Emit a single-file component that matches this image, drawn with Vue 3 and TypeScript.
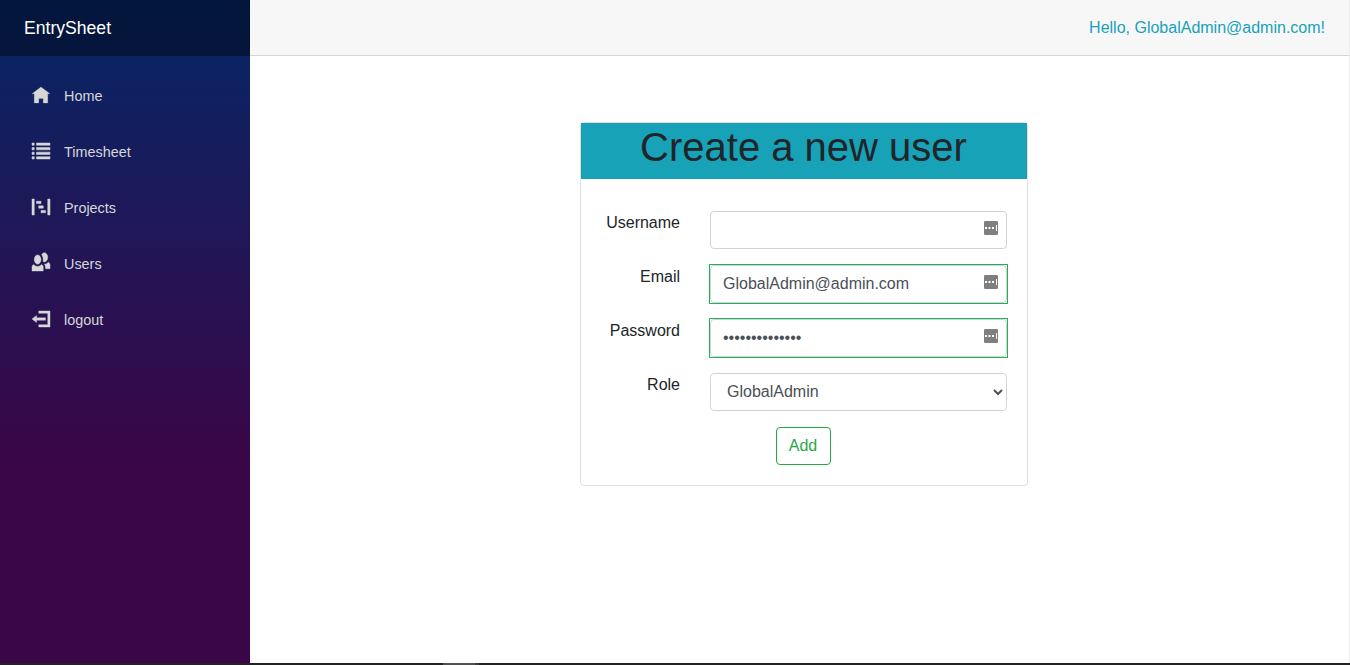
<script setup lang="ts">
import { ref } from 'vue'

interface NavItem {
  label: string
  path: string
  weight: number
}

const navItems: NavItem[] = [
  { label: 'Home', weight: 0.1, path: 'M4 0l-4 3h1v4h2v-2h2v2h2v-4.03l1 .03-4-3z' },
  {
    label: 'Timesheet',
    weight: 0.22,
    path: 'M0 0v1h1v-1h-1zm2 0v1h6v-1h-6zm-2 2v1h1v-1h-1zm2 0v1h6v-1h-6zm-2 2v1h1v-1h-1zm2 0v1h6v-1h-6zm-2 2v1h1v-1h-1zm2 0v1h6v-1h-6z',
  },
  {
    label: 'Projects',
    weight: 0.22,
    path: 'M0 0v7h1v-7h-1zm7 0v7h1v-7h-1zm-5 1v1h2v-1h-2zm1 2v1h2v-1h-2zm1 2v1h2v-1h-2z',
  },
  {
    label: 'Users',
    weight: 0.18,
    path: 'M5.5 -1c-.51 0-.95.35-1.22.88.45.54.72 1.28.72 2.13 0 .29-.03.55-.09.81.19.11.38.19.59.19.83 0 1.5-.9 1.5-2s-.67-2-1.5-2zm-3 1c-.83 0-1.5.9-1.5 2s.67 2 1.5 2 1.5-.9 1.5-2-.67-2-1.5-2zm4.75 3.16c-.43.51-1.02.82-1.69.84.27.38.44.84.44 1.34v.66h2v-1.66c0-.52-.31-.97-.75-1.19zm-6.5 1c-.44.22-.75.67-.75 1.19v1.66h5v-1.66c0-.52-.31-.97-.75-1.19-.45.53-1.06.84-1.75.84s-1.3-.32-1.75-.84z',
  },
  {
    label: 'logout',
    weight: 0.18,
    path: 'M3 0v1h4v5h-4v1h5v-7h-5zm-1 2l-2 1.5 2 1.5v-1h4v-1h-4v-1z',
  },
]

const fields = ref([
  { label: 'Username', type: 'text', value: '', valid: false },
  { label: 'Email', type: 'text', value: 'GlobalAdmin@admin.com', valid: true },
  { label: 'Password', type: 'password', value: '12345678901234', valid: true },
])
const role = ref('GlobalAdmin')
</script>

<template>
  <div class="screen">
    <div class="page">
      <aside class="sidebar">
        <div class="brand">EntrySheet</div>
        <nav class="nav">
          <a v-for="item in navItems" :key="item.label" class="nav-link">
            <svg class="nav-icon" viewBox="0 0 8 7" width="18" height="16" preserveAspectRatio="none">
              <path :d="item.path" :stroke-width="item.weight" />
            </svg>
            <span>{{ item.label }}</span>
          </a>
        </nav>
      </aside>
      <main class="main">
        <header class="top-row">
          <a class="greeting">Hello, GlobalAdmin@admin.com!</a>
        </header>
        <section class="content">
          <form class="card" @submit.prevent>
            <div class="card-header"><h1>Create a new user</h1></div>
            <div class="card-body">
              <div v-for="field in fields" :key="field.label" class="row">
                <label>{{ field.label }}</label>
                <div class="control" :class="{ valid: field.valid }">
                  <input v-model="field.value" :type="field.type" class="input" autocomplete="off" spellcheck="false" />
                  <svg class="key-icon" viewBox="0 0 14 14" width="14" height="14">
                    <rect width="14" height="14" rx="1.2" fill="#7f7f7f" />
                    <path d="M1 6h2v2h-2zM4.5 6h2v2h-2zM8 6h2v2h-2zM12 4h1v6h-1z" fill="#fff" />
                  </svg>
                </div>
              </div>
              <div class="row">
                <label>Role</label>
                <div class="control">
                  <select v-model="role" class="input select">
                    <option>GlobalAdmin</option>
                  </select>
                </div>
              </div>
              <div class="actions">
                <button type="submit" class="add">Add</button>
              </div>
            </div>
          </form>
        </section>
      </main>
      <div class="edge"></div>
    </div>
    <div class="dock"><span class="dock-active"></span><span class="dock-tail"></span></div>
  </div>
</template>

<style>
body {
  margin: 0;
  overflow: hidden;
}
</style>

<style scoped>
* {
  box-sizing: border-box;
}
.screen {
  display: flex;
  flex-direction: column;
  height: 665px;
  background: #fff;
  color: #212529;
  font: 16px/24px "Liberation Sans", Arial, sans-serif;
}
.page {
  display: flex;
  flex: 1;
  min-height: 0;
}
.sidebar {
  width: 250px;
  background: linear-gradient(180deg, rgb(5, 39, 103) 0%, #3a0647 70%);
}
.brand {
  height: 56px;
  padding-left: 24px;
  background: rgba(0, 0, 0, 0.4);
  color: #fff;
  font-size: 17.6px;
  line-height: 56px;
}
.nav {
  display: flex;
  flex-direction: column;
  gap: 16px;
  padding: 20px 12px;
}
.nav-link {
  display: flex;
  align-items: center;
  gap: 14px;
  height: 40px;
  padding-left: 20px;
  color: #d7d7d7;
  font-size: 14.4px;
}
.nav-icon {
  fill: #d7d7d7;
  stroke: #d7d7d7;
  overflow: visible;
  margin-top: -2px;
}
.main {
  flex: 1;
}
.top-row {
  display: flex;
  align-items: center;
  justify-content: flex-end;
  height: 56px;
  padding-right: 24px;
  border-bottom: 1px solid #d6d5d5;
  background: #f7f7f7;
}
.greeting {
  color: #17a2b8;
}
.content {
  display: flex;
  justify-content: center;
  padding: 66px 0 0 9px;
}
.card {
  width: 448px;
  height: 364px;
  border: 1px solid #dfdfdf;
  border-radius: 4px;
}
.card-header {
  height: 56px;
  padding-right: 1px;
  background: #17a2b8;
  text-align: center;
}
h1 {
  margin: 0;
  font-size: 40px;
  font-weight: 500;
  line-height: 48px;
}
.card-body {
  display: flex;
  flex-direction: column;
  gap: 16px;
  padding: 32px 20px 20px;
}
.row {
  display: grid;
  grid-template-columns: 79px 297px;
  column-gap: 30px;
  height: 38px;
}
label {
  text-align: right;
}
.control {
  position: relative;
}
.control.valid {
  outline: 1px solid #26b050;
}
.input {
  display: block;
  width: 100%;
  height: 38px;
  margin: 0;
  padding: 6px 12px;
  border: 1px solid #ced4da;
  border-radius: 4px;
  outline: none;
  background: #fff;
  color: #495057;
  font: inherit;
}
.select {
  padding: 5px 12px 7px;
}
.key-icon {
  position: absolute;
  top: 10px;
  right: 9px;
}
.actions {
  display: flex;
  justify-content: center;
  padding-right: 2px;
}
.add {
  width: 55px;
  height: 38px;
  padding: 0;
  border: 1px solid #28a745;
  border-radius: 4px;
  background: transparent;
  color: #28a745;
  font: inherit;
}
.edge {
  width: 1px;
  background: #ececec;
}
.dock {
  display: flex;
  height: 2px;
  padding-left: 443px;
  background: #232323;
}
.dock-active {
  width: 32px;
  background: #505050;
}
.dock-tail {
  width: 4px;
  background: #3c3c3c;
}
</style>
